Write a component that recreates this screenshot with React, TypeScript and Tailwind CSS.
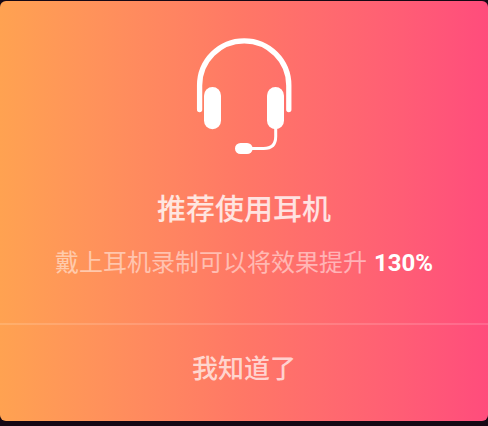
function Headset() {
  return (
    <svg className="block h-[120px] w-[98px]" viewBox="196 36 98 120" fill="none" stroke="white" strokeLinecap="round">
      <path d="M200.6 109.5V85.5a44.6 44.6 0 0 1 89.2 0v24" strokeWidth="5.3" />
      <rect x="205" y="87" width="17" height="42.2" rx="8.5" fill="white" stroke="none" />
      <rect x="268" y="87" width="17" height="42.2" rx="8.5" fill="white" stroke="none" />
      <path d="M276.7 128v8.5q0 12-12 12H252" strokeWidth="3" />
      <rect x="236" y="143" width="17.6" height="11" rx="5.5" fill="white" stroke="none" />
    </svg>
  );
}

export default function App() {
  return (
    <div className="h-[426px] w-[488px] overflow-hidden bg-[#160814] pt-px font-[Roboto,'Noto_Sans_CJK_SC',sans-serif]">
      <div className="flex h-[420px] flex-col rounded-[6px] bg-linear-to-r from-[#ffa251] via-[#ff7766] to-[#ff4c7c]">
        <div className="flex h-[322px] flex-col items-center border-white/15 pt-[35px]">
          <Headset />
          <h1 className="mt-[33px] h-[42px] text-[29px] leading-[42px] font-medium whitespace-nowrap text-white/80">推荐使用耳机</h1>
          <p className="mt-[14px] flex h-[36px] items-baseline gap-[7px] text-[24px] leading-[36px] whitespace-nowrap text-white/50">
            <span>戴上耳机录制可以将效果提升</span>
            <strong className="font-bold text-white">130%</strong>
          </p>
        </div>
        <div className="h-[2px] bg-white/15" />
        <button className="flex flex-1 items-center justify-center pb-[8px] text-[26px] leading-[36px] font-medium text-white/70">我知道了</button>
      </div>
    </div>
  );
}
